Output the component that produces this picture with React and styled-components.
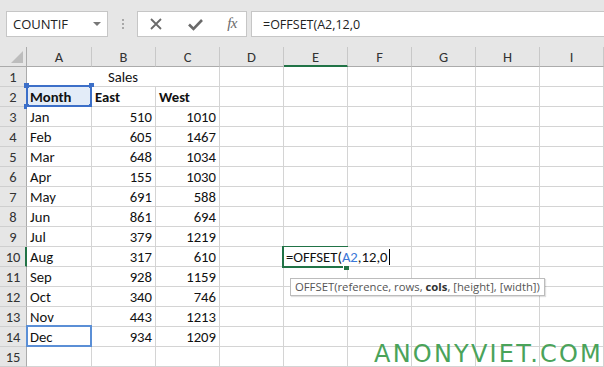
import React from "react"
import styled, { createGlobalStyle } from "styled-components"

const Global = createGlobalStyle`
    html, body {
        margin: 0;
        padding: 0;
        background: #fff;
        overflow: hidden;
    }
`;

const cellFont = `Calibri, Carlito, Lato, "Noto Sans", sans-serif`;
const uiFont = `"Segoe UI", "Open Sans", "Noto Sans", sans-serif`;

const Page = styled.div`
    position: relative;
    width: 604px;
    height: 367px;
    overflow: hidden;
`;

const Toolbar = styled.div`
    height: 47px;
    background: #e6e6e6;
    display: flex;
    align-items: flex-start;
    padding: 11px 0 0 6px;
    box-sizing: border-box;
`;

const NameBox = styled.div`
    width: 102px;
    height: 26px;
    box-sizing: border-box;
    background: #fff;
    border: 1px solid #c6c6c6;
    display: flex;
    align-items: center;
    justify-content: space-between;
    padding: 0 6px 0 6px;
    font-family: ${uiFont};
    font-size: 13px;
    color: #222;
`;

const DropArrow = styled.span`
    width: 0;
    height: 0;
    border-left: 4px solid transparent;
    border-right: 4px solid transparent;
    border-top: 4px solid #777;
`;

const Grip = styled.div`
    width: 2px;
    height: 12px;
    margin: 7px 13px 0 14px;
    background: radial-gradient(circle, #a8a8a8 0.9px, transparent 1.1px) 0 0 / 2px 4px repeat-y;
`;

const ButtonBox = styled.div`
    width: 110px;
    height: 26px;
    box-sizing: border-box;
    background: #fff;
    border: 1px solid #c6c6c6;
    display: flex;
    align-items: center;
    justify-content: space-between;
    padding: 0 9px 0 11px;
`;

const Fx = styled.span`
    font-family: "Liberation Serif", serif;
    font-style: italic;
    font-size: 15px;
    color: #6a6a6a;
    letter-spacing: -0.5px;
    padding-bottom: 2px;
`;

const FormulaBox = styled.div`
    flex: 1;
    height: 26px;
    margin-left: 4px;
    box-sizing: border-box;
    background: #fff;
    border: 1px solid #c6c6c6;
    border-right: none;
    display: flex;
    align-items: center;
    padding-left: 11px;
    font-family: ${uiFont};
    font-size: 12.5px;
    color: #222;
`;

const Sheet = styled.div`
    display: grid;
    grid-template-columns: 27px 65px repeat(7, 64px) 1fr;
    grid-auto-rows: 20px;
`;

const Corner = styled.div`
    background: #e6e6e6;
    border-right: 1px solid #ababab;
    border-bottom: 1px solid #ababab;
    position: relative;
    &::after {
        content: "";
        position: absolute;
        right: 3px;
        bottom: 3px;
        border-left: 12px solid transparent;
        border-bottom: 12px solid #bdbdbd;
    }
`;

const ColHead = styled.div`
    background: #e6e6e6;
    border-right: 1px solid #c8c8c8;
    border-bottom: ${p => (p.$active ? "2px solid #217346" : "1px solid #ababab")};
    font-family: ${cellFont};
    font-size: 14.5px;
    color: #333;
    text-align: center;
    line-height: 20px;
`;

const RowHead = styled.div`
    background: #e6e6e6;
    border-right: ${p => (p.$active ? "2px solid #217346" : "1px solid #ababab")};
    border-bottom: 1px solid #cfcfcf;
    font-family: ${cellFont};
    font-size: 14.5px;
    color: #333;
    text-align: center;
    line-height: 20px;
    padding-left: ${p => (p.$active ? "1px" : "0")};
`;

const Cell = styled.div`
    position: relative;
    grid-column: ${p => (p.$span ? `span ${p.$span}` : "auto")};
    border-right: 1px solid #d4d4d4;
    border-bottom: 1px solid #d4d4d4;
    padding: 0 3px;
    font-family: ${cellFont};
    font-size: 14.7px;
    font-weight: ${p => (p.$bold ? 700 : 400)};
    color: #111;
    text-align: ${p => p.$align || "left"};
    line-height: 20px;
    white-space: nowrap;
    background: ${p => p.$fill || "#fff"};
`;

const RefBox = styled.div`
    position: absolute;
    left: -1px;
    top: -2px;
    right: -1px;
    bottom: -1px;
    border: 2px solid ${p => p.$color};
    pointer-events: none;
`;

const Handle = styled.span`
    position: absolute;
    width: 5px;
    height: 5px;
    background: #3c6fc8;
    ${p => (p.$top ? "top: -4px;" : "bottom: -4px;")}
    ${p => (p.$left ? "left: -4px;" : "right: -4px;")}
`;

const EditBox = styled.div`
    position: absolute;
    left: -2px;
    top: -1px;
    right: -1px;
    bottom: -2px;
    border: 2px solid #217346;
    z-index: 2;
    &::after {
        content: "";
        position: absolute;
        right: -3px;
        bottom: -4px;
        width: 5px;
        height: 5px;
        background: #217346;
        border-left: 1px solid #fff;
        border-top: 1px solid #fff;
    }
`;

const EditText = styled.div`
    position: absolute;
    left: 0;
    top: 0;
    height: 19px;
    padding: 0 2px 0 2px;
    background: #fff;
    z-index: 3;
    line-height: 20px;
`;

const Ref = styled.span`
    color: #3c78d8;
`;

const Caret = styled.span`
    display: inline-block;
    width: 1px;
    height: 16px;
    background: #000;
    vertical-align: -3px;
    margin-left: 1px;
`;

const Tip = styled.div`
    position: absolute;
    left: 6px;
    top: 31px;
    z-index: 4;
    padding: 0 4px;
    height: 16px;
    background: #fff;
    border: 1px solid #bcbcbc;
    box-shadow: 1px 1px 1px rgba(0, 0, 0, 0.12);
    font-family: ${uiFont};
    font-size: 11.3px;
    line-height: 15px;
    color: #555;
    b {
        color: #333;
    }
`;

const Watermark = styled.div`
    position: absolute;
    right: 1px;
    bottom: -1px;
    font-family: "Comic Sans MS", "DejaVu Sans", sans-serif;
    font-size: 24px;
    letter-spacing: 2.2px;
    color: #4aa35a;
    z-index: 5;
`;

function XIcon() {
    return (
        <svg width="14" height="14" viewBox="0 0 14 14">
            <path d="M2 2 L12 12 M12 2 L2 12" stroke="#6a6a6a" strokeWidth="1.8" />
        </svg>
    )
}

function CheckIcon() {
    return (
        <svg width="15" height="13" viewBox="0 0 15 13">
            <path d="M1 6.5 L5.5 11 L14 2" stroke="#6a6a6a" strokeWidth="2.6" fill="none" />
        </svg>
    )
}

const cols = ["A", "B", "C", "D", "E", "F", "G", "H", "I"];
const data = [
    ["Jan", 510, 1010], ["Feb", 605, 1467], ["Mar", 648, 1034], ["Apr", 155, 1030],
    ["May", 691, 588], ["Jun", 861, 694], ["Jul", 379, 1219], ["Aug", 317, 610],
    ["Sep", 928, 1159], ["Oct", 340, 746], ["Nov", 443, 1213], ["Dec", 934, 1209],
];

function Blanks({ from, row }) {
    return cols.slice(from).map(c => {
        if (c === "E" && row === 10) {
            return (
                <Cell key={c}>
                    <EditBox />
                    <EditText>
                        =OFFSET(<Ref>A2</Ref>,12,0<Caret />
                    </EditText>
                    <Tip>OFFSET(reference, rows, <b>cols</b>, [height], [width])</Tip>
                </Cell>
            )
        }
        return <Cell key={c} />
    })
}

export default function App() {
    return (
        <Page>
            <Global />
            <Toolbar>
                <NameBox>COUNTIF<DropArrow /></NameBox>
                <Grip />
                <ButtonBox>
                    <XIcon />
                    <CheckIcon />
                    <Fx>fx</Fx>
                </ButtonBox>
                <FormulaBox>=OFFSET(A2,12,0</FormulaBox>
            </Toolbar>
            <Sheet>
                <Corner />
                {cols.map(c => <ColHead key={c} $active={c === "E"}>{c}</ColHead>)}

                <RowHead>1</RowHead>
                <Cell $span={3} $align="center">Sales</Cell>
                <Blanks from={3} row={1} />

                <RowHead>2</RowHead>
                <Cell $bold $fill="#e3ecf8">
                    Month
                    <RefBox $color="#3c6fc8">
                        <Handle $top $left /><Handle $top /><Handle $left /><Handle />
                    </RefBox>
                </Cell>
                <Cell $bold>East</Cell>
                <Cell $bold>West</Cell>
                <Blanks from={3} row={2} />

                {data.map(([m, e, w], i) => {
                    const row = i + 3;
                    return (
                        <React.Fragment key={m}>
                            <RowHead $active={row === 10}>{row}</RowHead>
                            <Cell>
                                {m}
                                {row === 14 && <RefBox $color="#5b8fd6" />}
                            </Cell>
                            <Cell $align="right">{e}</Cell>
                            <Cell $align="right">{w}</Cell>
                            <Blanks from={3} row={row} />
                        </React.Fragment>
                    )
                })}

                <RowHead>15</RowHead>
                <Blanks from={0} row={15} />
            </Sheet>
            <Watermark>ANONYVIET.COM</Watermark>
        </Page>
    )
}
